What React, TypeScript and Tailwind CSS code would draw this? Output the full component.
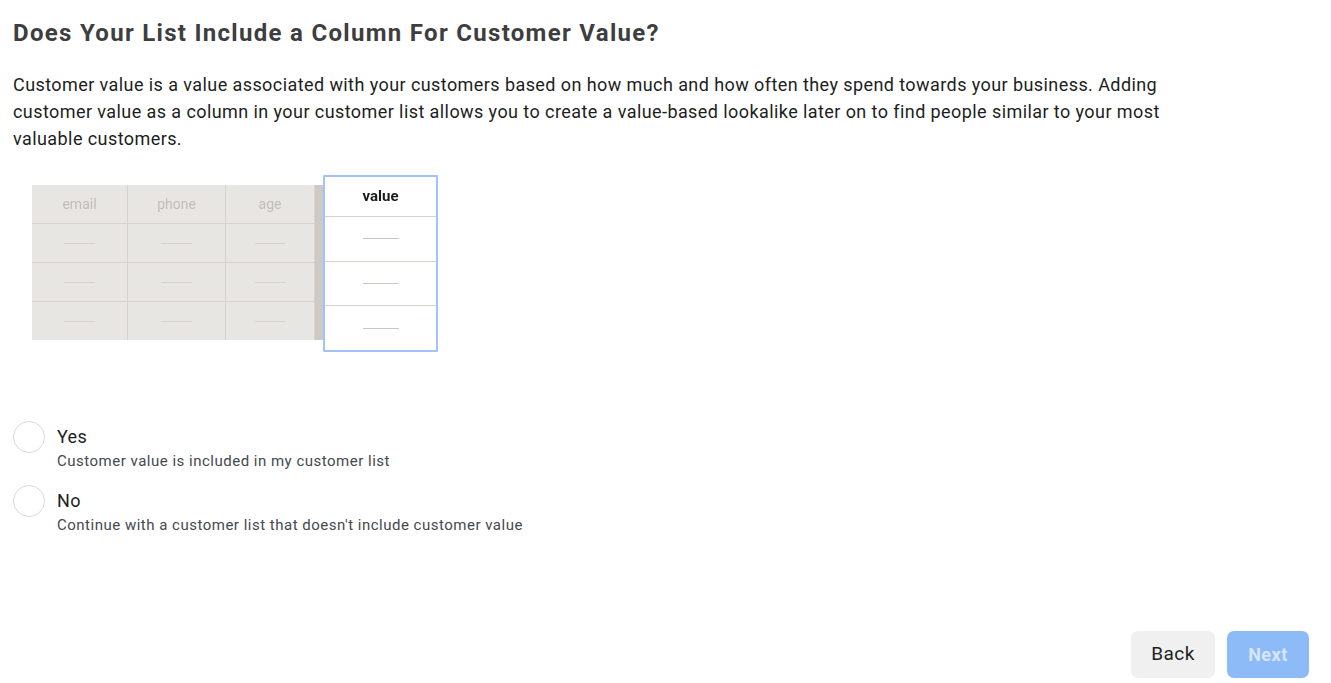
import React from 'react';

const grayCols = [
  { label: 'email', w: 'w-[96px]' },
  { label: 'phone', w: 'w-[98px]' },
  { label: 'age', w: 'w-[89px]' },
];

function Dash({ className = 'w-[31px] bg-[#d6d2ce]' }: { className?: string }) {
  return <div className={`h-px ${className}`} />;
}

function TableIllustration() {
  return (
    <div className="flex items-start">
      {/* faded columns */}
      <div className="mt-[10px] flex bg-[#e8e6e3] blur-[0.5px]">
        {grayCols.map((c) => (
          <div key={c.label} className={`${c.w} flex flex-col border-r border-[#d6d3cf]`}>
            <div className="flex h-[38px] items-center justify-center text-[14px] text-[#c2bdb8]">
              {c.label}
            </div>
            {[0, 1, 2].map((r) => (
              <div key={r} className="flex h-[39px] items-center justify-center border-t border-[#d6d3cf]">
                <Dash />
              </div>
            ))}
          </div>
        ))}
        <div className="w-[8px] bg-[#cdcac6]" />
      </div>
      {/* highlighted value column */}
      <div className="flex h-[177px] w-[115px] flex-col rounded-[1px] border-2 border-[#a3c2f9] bg-white">
        <div className="flex h-[39px] items-center justify-center text-[15px] font-bold text-[#1c1c1c] blur-[0.3px]">
          value
        </div>
        {[0, 1, 2].map((r) => (
          <div key={r} className="flex flex-1 items-center justify-center border-t border-[#d6d3cf]">
            <Dash className="w-[36px] bg-[#cac6c2]" />
          </div>
        ))}
      </div>
    </div>
  );
}

function Option({ title, desc }: { title: string; desc: string }) {
  return (
    <label className="flex cursor-pointer items-start gap-[12px]">
      <span className="h-[32px] w-[32px] shrink-0 rounded-full border border-[#dadada] bg-white" />
      <span className="flex flex-col pt-[5px]">
        <span className="text-[18px] leading-[22px] tracking-[0.3px] text-[#1c1e21]">{title}</span>
        <span className="mt-[4px] text-[15px] leading-[18px] tracking-[0.5px] text-[#444950]">{desc}</span>
      </span>
    </label>
  );
}

export default function App() {
  return (
    <div className="flex h-screen flex-col bg-white px-[13px] font-['Roboto',sans-serif]">
      <h1 className="mt-[17px] text-[24px] font-bold leading-[32px] tracking-[1.3px] text-[#3e3e3e]">
        Does Your List Include a Column For Customer Value?
      </h1>
      <p className="mt-[22px] max-w-[1170px] text-[18px] leading-[27px] tracking-[0.42px] text-[#1c1e21]">
        Customer value is a value associated with your customers based on how much and how often they spend
        towards your business. Adding customer value as a column in your customer list allows you to create a
        value-based lookalike later on to find people similar to your most valuable customers.
      </p>

      <div className="ml-[19px] mt-[23px]">
        <TableIllustration />
      </div>

      <div className="mt-[69px] flex flex-col gap-[15px]">
        <Option title="Yes" desc="Customer value is included in my customer list" />
        <Option title="No" desc="Continue with a customer list that doesn't include customer value" />
      </div>

      <div className="mt-auto mb-[5px] flex justify-end gap-[12px] pr-[9px]">
        <button className="h-[47px] w-[84px] rounded-[7px] bg-[#f0f0f0] text-[19px] tracking-[0.5px] text-[#1c1e21]">
          Back
        </button>
        <button className="h-[47px] w-[82px] rounded-[7px] bg-[#8dbbf7] text-[18px] font-bold tracking-[0.5px] text-[#d6e6fc]">
          Next
        </button>
      </div>
    </div>
  );
}
